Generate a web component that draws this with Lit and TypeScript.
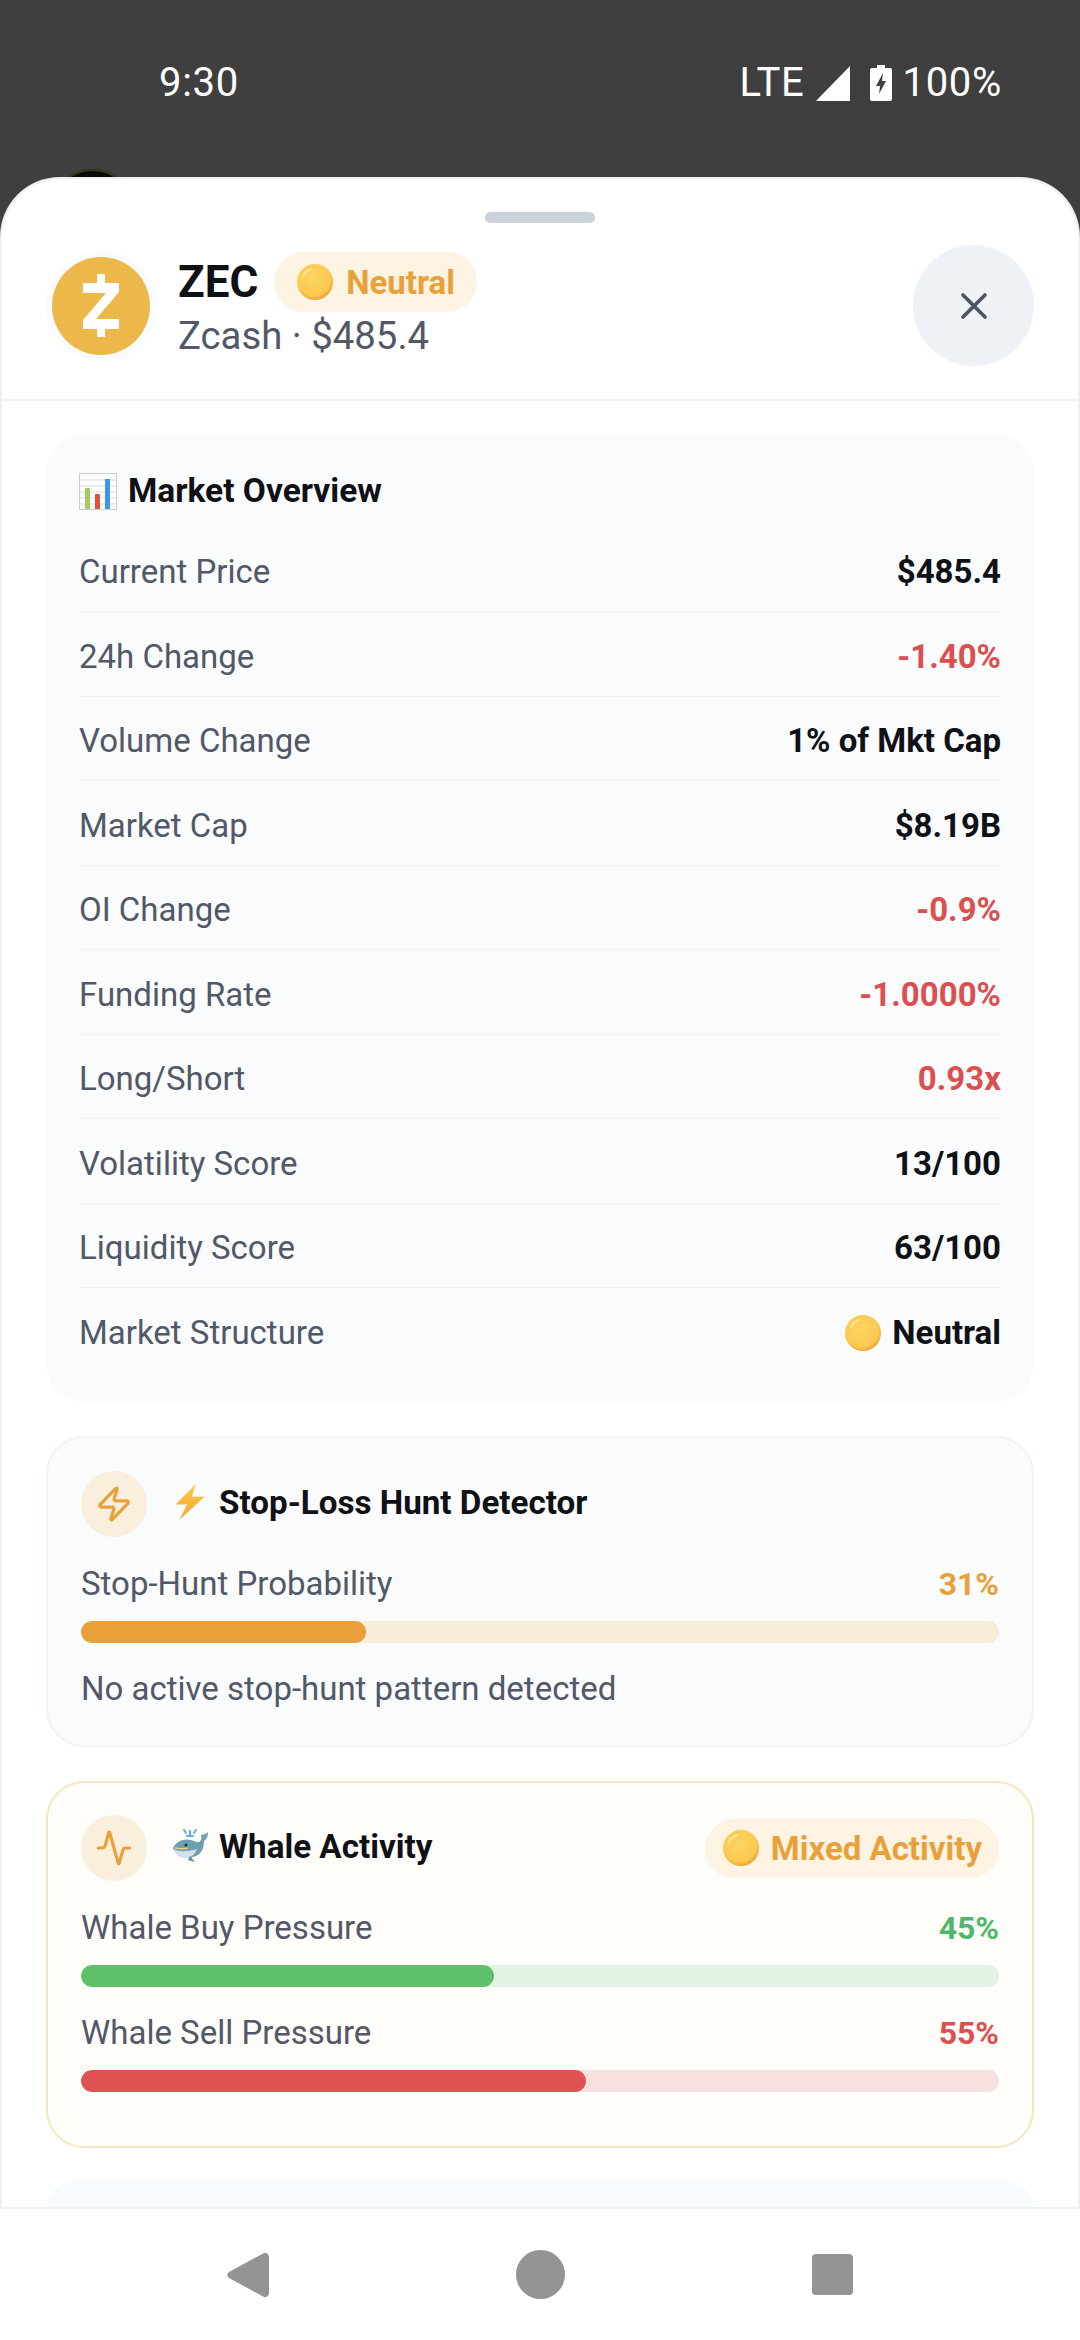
import { LitElement, html, css, svg } from 'lit';
import { customElement } from 'lit/decorators.js';

const rows = [
  { label: 'Current Price', value: '$485.4' },
  { label: '24h Change', value: '-1.40%', tone: 'red' },
  { label: 'Volume Change', value: '1% of Mkt Cap' },
  { label: 'Market Cap', value: '$8.19B' },
  { label: 'OI Change', value: '-0.9%', tone: 'red' },
  { label: 'Funding Rate', value: '-1.0000%', tone: 'red' },
  { label: 'Long/Short', value: '0.93x', tone: 'red' },
  { label: 'Volatility Score', value: '13/100' },
  { label: 'Liquidity Score', value: '63/100' },
  { label: 'Market Structure', value: 'Neutral', dot: true },
];

// yellow circle emoji, shared by the badges and the last row
const dot = html`<svg class="dot" viewBox="0 0 36 36">
  <defs>
    <radialGradient id="d" cx="45%" cy="40%" r="60%">
      <stop offset="0" stop-color="#fdd462" />
      <stop offset="0.8" stop-color="#fbc94f" />
      <stop offset="1" stop-color="#eaa437" />
    </radialGradient>
  </defs>
  <circle cx="18" cy="18" r="18" fill="url(#d)" />
  <path d="M6 12a14 14 0 0 1 8-7" fill="none" stroke="#fde59a" stroke-width="2" stroke-linecap="round" />
</svg>`;

const chartEmoji = html`<svg class="chart" viewBox="0 0 38 37">
  <rect x="0.5" y="0.5" width="37" height="36" fill="#fff" stroke="#c9ced3" />
  ${[7, 13, 19, 25, 31].map((y) => svg`<path d="M1 ${y}h36" stroke="#d5d9dd" />`)}
  <rect x="6" y="15" width="5" height="21" fill="#a6c763" />
  <rect x="16" y="21" width="5" height="15" fill="#e2503c" />
  <rect x="26" y="6" width="5" height="30" fill="#3d95e6" />
</svg>`;

const boltEmoji = html`<svg class="emoji" viewBox="0 0 36 37">
  <defs>
    <linearGradient id="b" x1="0" y1="0" x2="0" y2="1">
      <stop offset="0" stop-color="#fbc94a" />
      <stop offset="1" stop-color="#f3a92f" />
    </linearGradient>
  </defs>
  <path d="M24 0 3 21h12L7 37l26-24H20z" fill="url(#b)" />
</svg>`;

const whaleEmoji = html`<svg class="emoji" viewBox="0 0 36 34">
  <path d="M12 1l2 3M24 1l-2 3M18 2v4M15 7h6" stroke="#58aee2" stroke-width="2" fill="none" stroke-linecap="round" />
  <path d="M1 19c3-7 11-10 18-8 4 1 6 3 8 2 2-1 3-3 2-7 2 0 5-1 7-3 0 4-1 7-4 9 0 7-2 12-8 15-5 2-10 2-14 0-4-2-8-4-9-8z" fill="#6f9fb1" />
  <path d="M1 20c6 3 14 3 24 0-2 6-7 9-12 9-6 0-10-4-12-9z" fill="#cfe3e8" />
  <path d="M3 19c5 1 9 1 13 0" stroke="#e9cf7a" stroke-width="1.5" fill="none" />
  <circle cx="14" cy="16" r="1.6" fill="#1f3340" />
  <path d="M18 27l5 6-7-2z" fill="#5d8ea1" />
</svg>`;

const zap = html`<svg class="stroke-icon" viewBox="0 0 24 24">
  <path d="M4 14a1 1 0 0 1-.78-1.63l9.9-10.2a.5.5 0 0 1 .86.46l-1.92 6.02A1 1 0 0 0 13 10h7a1 1 0 0 1 .78 1.63l-9.9 10.2a.5.5 0 0 1-.86-.46l1.92-6.02A1 1 0 0 0 11 14z" />
</svg>`;

const activity = html`<svg class="stroke-icon" viewBox="0 0 24 24">
  <path d="M22 12h-2.48a2 2 0 0 0-1.93 1.46l-2.35 8.36a.25.25 0 0 1-.48 0L9.24 2.18a.25.25 0 0 0-.48 0l-2.35 8.36A2 2 0 0 1 4.49 12H2" />
</svg>`;

@customElement('app-root')
export class AppRoot extends LitElement {
  static styles = css`
    :host {
      display: flex;
      flex-direction: column;
      height: 2340px;
      background: #3f3f3f;
      font-family: Roboto, 'Liberation Sans', sans-serif;
      color: #0f1115;
      overflow: hidden;
    }

    .status {
      flex: none;
      position: relative;
      height: 177px;
      box-sizing: border-box;
      padding: 61px 78px 0 159px;
      display: flex;
      justify-content: space-between;
      align-items: flex-start;
      color: #fff;
      font-size: 40px;
      line-height: 44px;
      letter-spacing: 0.7px;
    }
    .status-right {
      display: flex;
      align-items: center;
    }
    .signal {
      width: 34px;
      height: 35px;
      margin: 0 20px 0 12px;
    }
    .battery {
      width: 22px;
      height: 36px;
      margin-right: 10px;
    }
    /* the coin that peeks out from behind the sheet */
    .peek {
      position: absolute;
      left: 53px;
      top: 169px;
      width: 79px;
      height: 79px;
      border-radius: 50%;
      background: #0b0b06;
      box-shadow: inset 0 3px 0 -1px #3a3a18;
    }

    .sheet {
      flex: 1;
      min-height: 0;
      position: relative;
      background: #fff;
      border: 2px solid #eef0f2;
      border-bottom: 0;
      border-radius: 60px 60px 0 0;
      overflow: hidden;
      box-sizing: border-box;
    }
    .handle {
      width: 110px;
      height: 11px;
      margin: 33px auto 0;
      border-radius: 6px;
      background: #cbd2dc;
    }
    .header {
      display: flex;
      align-items: center;
      height: 121px;
      margin-top: 22px;
      padding: 0 44px 0 44px;
    }
    .avatar {
      flex: none;
      width: 110px;
      height: 110px;
      border-radius: 50%;
      background: #fafbfc;
      display: flex;
      align-items: center;
      justify-content: center;
      margin-right: 22px;
    }
    .avatar svg {
      width: 98px;
      height: 98px;
    }
    .head-text {
      flex: 1;
    }
    .name-row {
      display: flex;
      align-items: center;
      gap: 16px;
      height: 60px;
    }
    .symbol {
      font-size: 44px;
      font-weight: 700;
    }
    .sub {
      font-size: 38.3px;
      line-height: 46px;
      padding-top: 1px;
      color: #525866;
    }
    .pill {
      display: inline-flex;
      align-items: center;
      gap: 13px;
      height: 60px;
      padding: 0 22px 0 23px;
      border-radius: 30px;
      background: #fdf3e2;
      color: #e8a13a;
      font-size: 33px;
      font-weight: 700;
    }
    .dot {
      flex: none;
      width: 36px;
      height: 36px;
    }
    .close {
      flex: none;
      width: 121px;
      height: 121px;
      border-radius: 50%;
      background: #eef1f5;
      display: flex;
      align-items: center;
      justify-content: center;
    }
    .close svg {
      width: 44px;
      height: 44px;
      fill: none;
      stroke: #4b5563;
      stroke-width: 2;
      stroke-linecap: round;
    }
    .divider {
      height: 2px;
      margin-top: 33px;
      background: #eef0f2;
    }

    .content {
      display: flex;
      flex-direction: column;
      gap: 34px;
      padding: 33px 44px 0;
    }
    .card {
      border-radius: 38px;
      background: #f9fbfd;
      box-sizing: border-box;
    }
    .overview {
      padding: 35px 33px 29.5px;
    }
    .overview-title {
      display: flex;
      align-items: center;
      gap: 11px;
      font-size: 33.5px;
      line-height: 44px;
      font-weight: 700;
      margin-bottom: 14.5px;
    }
    .chart {
      width: 38px;
      height: 37px;
    }
    .row {
      display: flex;
      justify-content: space-between;
      align-items: center;
      box-sizing: border-box;
      height: 84.5px;
      padding: 22.5px 0 16.5px;
      border-bottom: 1.5px solid #f0f2f5;
      font-size: 33px;
      line-height: 44px;
      color: #525866;
    }
    .row:last-child {
      border-bottom: 0;
    }
    .value {
      display: flex;
      align-items: center;
      gap: 11px;
      font-size: 33px;
      font-weight: 700;
      color: #0f1115;
    }
    .value.red {
      color: #dc4f4f;
    }

    .panel {
      border: 2px solid #f0f3f7;
      padding: 33px 33px 34.5px;
    }
    .panel.whale {
      padding: 32px 33px 54px;
      background: #fffdf9;
      border-color: #f5e6c0;
    }
    .panel-head {
      display: flex;
      align-items: center;
      gap: 25px;
      margin-bottom: 1px;
    }
    .icon-circle {
      flex: none;
      width: 66px;
      height: 66px;
      border-radius: 50%;
      background: #faeedd;
      display: flex;
      align-items: center;
      justify-content: center;
    }
    .stroke-icon {
      width: 38px;
      height: 38px;
      fill: none;
      stroke: #e8a13a;
      stroke-width: 2;
      stroke-linecap: round;
      stroke-linejoin: round;
    }
    .panel-title {
      flex: 1;
      display: flex;
      align-items: center;
      gap: 11px;
      padding-bottom: 4px;
      font-size: 33.2px;
      font-weight: 700;
    }
    .emoji {
      width: 36px;
      height: 36px;
    }
    .panel .pill {
      height: 59px;
      padding: 0 17px 0 18px;
      gap: 12px;
    }
    .stat-head {
      display: flex;
      justify-content: space-between;
      margin-top: 24.5px;
      font-size: 33px;
      line-height: 44px;
      color: #525866;
    }
    .stat-head b {
      font-size: 32px;
      font-weight: 700;
    }
    .track {
      height: 22px;
      margin-top: 15px;
      border-radius: 11px;
      overflow: hidden;
    }
    .fill {
      height: 100%;
      border-radius: 11px;
    }
    .orange b { color: #e8a13a; }
    .green b { color: #4fb868; }
    .redbar b { color: #dc4f4f; }
    .note {
      margin-top: 24px;
      font-size: 33px;
      line-height: 44px;
      color: #525866;
    }
    .stub {
      height: 60px;
      background: #f8fbfd;
      margin-top: -2px;
    }

    .nav {
      flex: none;
      height: 133px;
      box-sizing: border-box;
      border-top: 2px solid #eef0f2;
      background: #fff;
      position: relative;
      display: flex;
      align-items: center;
      justify-content: center;
      gap: 247px;
    }
    .nav svg {
      display: block;
      fill: #949494;
    }
  `;

  private renderStat(label: string, pct: number, fill: string, track: string, cls: string) {
    return html`
      <div class="stat-head ${cls}"><span>${label}</span><b>${pct}%</b></div>
      <div class="track" style="background:${track}">
        <div class="fill" style="width:${pct}%;background:${fill}"></div>
      </div>
    `;
  }

  render() {
    return html`
      <div class="status">
        <span>9:30</span>
        <div class="status-right">
          <span>LTE</span>
          <svg class="signal" viewBox="0 0 34 35"><path d="M34 0v35H0z" fill="#fff" /></svg>
          <svg class="battery" viewBox="0 0 22 36">
            <path d="M7 0h8v3h5a2 2 0 0 1 2 2v29a2 2 0 0 1-2 2H2a2 2 0 0 1-2-2V5a2 2 0 0 1 2-2h5z" fill="#fff" />
            <path d="M13 8 6 21h4l-1 8 7-13h-4z" fill="#3f3f3f" />
          </svg>
          <span>100%</span>
        </div>
        <div class="peek"></div>
      </div>

      <div class="sheet">
        <div class="handle"></div>
        <div class="header">
          <div class="avatar">
            <svg viewBox="0 0 98 98">
              <circle cx="49" cy="49" r="49" fill="#ecb84a" />
              <path d="M45 17h8v9h14v9L44 62h23v10H53v8h-8v-8H31v-9L54 36H31V26h14z" fill="#fff" />
            </svg>
          </div>
          <div class="head-text">
            <div class="name-row">
              <span class="symbol">ZEC</span>
              <span class="pill">${dot}Neutral</span>
            </div>
            <div class="sub">Zcash · $485.4</div>
          </div>
          <div class="close">
            <svg viewBox="0 0 24 24"><path d="M18 6 6 18M6 6l12 12" /></svg>
          </div>
        </div>
        <div class="divider"></div>

        <div class="content">
          <div class="card overview">
            <div class="overview-title">${chartEmoji}<span>Market Overview</span></div>
            ${rows.map(
              (r) => html`<div class="row">
                <span>${r.label}</span>
                <span class="value ${r.tone ?? ''}">${r.dot ? dot : ''}${r.value}</span>
              </div>`
            )}
          </div>

          <div class="card panel">
            <div class="panel-head">
              <div class="icon-circle">${zap}</div>
              <div class="panel-title">${boltEmoji}<span>Stop-Loss Hunt Detector</span></div>
            </div>
            ${this.renderStat('Stop-Hunt Probability', 31, '#e8a13a', '#f9ecd9', 'orange')}
            <div class="note">No active stop-hunt pattern detected</div>
          </div>

          <div class="card panel whale">
            <div class="panel-head">
              <div class="icon-circle">${activity}</div>
              <div class="panel-title">${whaleEmoji}<span>Whale Activity</span></div>
              <span class="pill">${dot}Mixed Activity</span>
            </div>
            ${this.renderStat('Whale Buy Pressure', 45, '#5fc06a', '#e3f2e3', 'green')}
            ${this.renderStat('Whale Sell Pressure', 55, '#e05252', '#f7e0e0', 'redbar')}
          </div>

          <div class="card stub"></div>
        </div>
      </div>

      <div class="nav">
        <svg width="42" height="46" viewBox="0 0 42 46">
          <path d="M37 1 2 20a3.500 3.500 0 0 0 0 6l35 19a4 4 0 0 0 5-4V5a4 4 0 0 0-5-4z" />
        </svg>
        <svg width="49" height="49" viewBox="0 0 49 49"><circle cx="24.500" cy="24.500" r="24.500" /></svg>
        <svg width="41" height="41" viewBox="0 0 41 41"><rect width="41" height="41" rx="4" /></svg>
      </div>
    `;
  }
}
